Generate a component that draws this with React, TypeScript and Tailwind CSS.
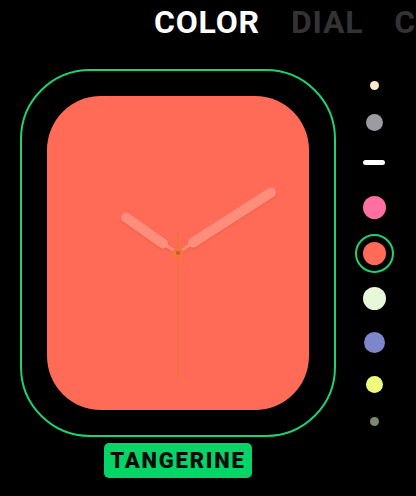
import React from "react";

const tabs = [
  { label: "COLOR", active: true },
  { label: "DIAL", active: false },
  { label: "COMPLICATIONS", active: false },
];

// picker wheel: slot height + what sits in it
const swatches: { h: string; kind: "dot" | "bar" | "ring"; size: string; color: string }[] = [
  { h: "h-[36px]", kind: "dot", size: "w-[9px] h-[9px]", color: "bg-[#ffe9c9]" },
  { h: "h-[38px]", kind: "dot", size: "w-[17px] h-[17px]", color: "bg-[#9b9ba1]" },
  { h: "h-[43px]", kind: "bar", size: "w-[22px] h-[5px]", color: "bg-white" },
  { h: "h-[46px]", kind: "dot", size: "w-[23px] h-[23px]", color: "bg-[#ff6f9f]" },
  { h: "h-[46px]", kind: "ring", size: "w-[23px] h-[23px]", color: "bg-[#ff6b57]" },
  { h: "h-[45px]", kind: "dot", size: "w-[23px] h-[23px]", color: "bg-[#e7f8da]" },
  { h: "h-[43px]", kind: "dot", size: "w-[21px] h-[21px]", color: "bg-[#7e86cb]" },
  { h: "h-[40px]", kind: "dot", size: "w-[17px] h-[17px]", color: "bg-[#eefb7b]" },
  { h: "h-[35px]", kind: "dot", size: "w-[9px] h-[9px]", color: "bg-[#7c8a6f]" },
];

function Hands() {
  return (
    <svg viewBox="0 0 262 313" className="w-full h-full">
      <defs>
        <filter id="sh" x="-20%" y="-20%" width="140%" height="140%">
          <feDropShadow dx="0" dy="1" stdDeviation="1.2" floodColor="#b8402a" floodOpacity="0.35" />
        </filter>
      </defs>
      <g filter="url(#sh)" stroke="#ff8d7b" strokeLinecap="round">
        {/* hour */}
        <line x1="131" y1="156.5" x2="116" y2="147" strokeWidth="3" />
        <line x1="116" y1="147" x2="79" y2="121" strokeWidth="10" />
        {/* minute */}
        <line x1="131" y1="156.5" x2="146" y2="146" strokeWidth="3" />
        <line x1="146" y1="146" x2="224" y2="96" strokeWidth="10" />
      </g>
      {/* second */}
      <line x1="131" y1="135" x2="131" y2="282" stroke="#f0723d" strokeWidth="2" />
      <circle cx="131" cy="156.5" r="5.5" fill="#f2773f" />
      <circle cx="131" cy="156.5" r="2" fill="#cc5630" />
    </svg>
  );
}

export default function App() {
  return (
    <div
      className="w-[416px] h-[496px] bg-black overflow-hidden flex flex-col"
      style={{ fontFamily: "Roboto, 'Liberation Sans', sans-serif" }}
    >
      {/* tab strip */}
      <div className="h-[45px] flex gap-[31px] pl-[154px] pt-[6px] whitespace-nowrap">
        {tabs.map((t) => (
          <span
            key={t.label}
            className={`text-[32px] leading-[32px] font-bold tracking-[0.8px] ${t.active ? "text-white" : "text-[#333333]"}`}
          >
            {t.label}
          </span>
        ))}
      </div>

      <div className="flex">
        {/* watch + name */}
        <div className="flex flex-col items-center pl-[20px] pt-[24px]">
          <div className="w-[316px] h-[368px] rounded-[70px] border-2 border-[#1fd16f] p-[25px]">
            <div className="w-full h-full rounded-[54px] bg-[#ff6b57]">
              <Hands />
            </div>
          </div>
          <div className="mt-[6px] h-[35px] w-[148px] rounded-[5px] bg-[#05d467] flex items-center justify-center">
            <span className="text-[22px] leading-none font-black tracking-[1.8px] text-[#0b0b0b]">TANGERINE</span>
          </div>
        </div>

        {/* colour wheel */}
        <div className="ml-[18px] w-[40px] pt-[22px] flex flex-col">
          {swatches.map((s, i) => (
            <div key={i} className={`${s.h} flex items-center justify-center`}>
              {s.kind === "ring" ? (
                <div className="w-[39px] h-[39px] rounded-full border-2 border-[#1fd16f] flex items-center justify-center">
                  <div className={`${s.size} ${s.color} rounded-full`} />
                </div>
              ) : (
                <div className={`${s.size} ${s.color} rounded-full`} />
              )}
            </div>
          ))}
        </div>
      </div>
    </div>
  );
}
